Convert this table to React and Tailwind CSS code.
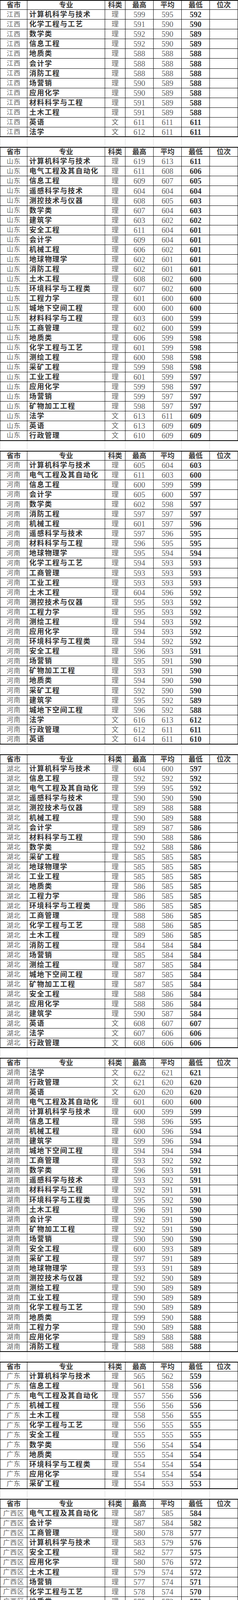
import React from 'react';

const SECTIONS = [
  { p: '江西', rows: `计算机科学与技术 理 599 595 592
化学工程与工艺 理 591 590 590
数学类 理 592 590 589
信息工程 理 592 590 589
地质类 理 588 588 588
会计学 理 588 588 588
消防工程 理 588 588 588
场营销 理 590 589 588
应用化学 理 590 589 588
材料科学与工程 理 591 589 588
土木工程 理 591 589 588
英语 文 611 611 611
法学 文 612 611 611` },
  { p: '山东', rows: `计算机科学与技术 理 619 613 611
电气工程及其自动化 理 611 608 606
信息工程 理 609 607 605
遥感科学与技术 理 604 604 604
测控技术与仪器 理 608 605 603
数学类 理 607 604 603
建筑学 理 603 602 602
安全工程 理 611 604 601
会计学 理 609 604 601
机械工程 理 606 602 601
地球物理学 理 602 601 601
消防工程 理 602 601 601
土木工程 理 608 602 600
环境科学与工程类 理 607 602 600
工程力学 理 601 600 600
城地下空间工程 理 600 600 600
材料科学与工程 理 603 600 599
工商管理 理 602 600 599
地质类 理 606 599 598
化学工程与工艺 理 601 599 598
测绘工程 理 600 598 598
采矿工程 理 599 598 598
工业工程 理 601 599 597
应用化学 理 599 598 597
场营销 理 599 597 597
矿物加工工程 理 598 597 597
法学 文 613 611 609
英语 文 613 609 609
行政管理 文 610 609 609` },
  { p: '河南', rows: `计算机科学与技术 理 605 604 603
电气工程及其自动化 理 611 603 600
信息工程 理 600 599 599
会计学 理 605 600 597
数学类 理 602 598 597
消防工程 理 597 597 597
机械工程 理 601 597 596
遥感科学与技术 理 597 596 595
材料科学与工程 理 596 595 595
地球物理学 理 595 594 594
化学工程与工艺 理 594 593 593
工商管理 理 593 593 593
工业工程 理 593 593 593
土木工程 理 604 596 592
测控技术与仪器 理 595 593 592
工程力学 理 595 593 592
测绘工程 理 594 593 592
应用化学 理 594 593 592
环境科学与工程类 理 594 592 592
安全工程 理 596 593 591
场营销 理 595 591 590
矿物加工工程 理 593 591 590
地质类 理 594 590 590
采矿工程 理 592 590 590
建筑学 理 595 592 589
城地下空间工程 理 596 592 588
法学 文 616 613 612
行政管理 文 612 611 611
英语 文 614 611 610` },
  { p: '湖北', rows: `计算机科学与技术 理 604 600 597
信息工程 理 592 592 592
电气工程及其自动化 理 599 595 592
遥感科学与技术 理 590 590 590
测控技术与仪器 理 589 588 588
机械工程 理 590 589 588
会计学 理 589 587 586
材料科学与工程 理 590 588 586
数学类 理 592 588 586
采矿工程 理 585 585 585
地球物理学 理 585 585 585
工业工程 理 585 585 585
地质类 理 586 585 585
工程力学 理 586 585 585
环境科学与工程类 理 586 585 585
工商管理 理 588 586 585
化学工程与工艺 理 588 586 585
土木工程 理 589 586 585
消防工程 理 584 584 584
场营销 理 585 584 584
测绘工程 理 587 585 584
城地下空间工程 理 587 585 584
矿物加工工程 理 587 585 584
安全工程 理 588 586 584
应用化学 理 588 586 584
建筑学 理 590 587 584
英语 文 608 607 607
法学 文 607 606 606
行政管理 文 608 606 606` },
  { p: '湖南', rows: `法学 文 622 621 621
行政管理 文 621 620 620
英语 文 620 620 620
电气工程及其自动化 理 601 600 600
计算机科学与技术 理 600 599 599
信息工程 理 598 596 595
机械工程 理 600 596 594
建筑学 理 599 596 594
城地下空间工程 理 594 594 594
工商管理 理 593 592 592
数学类 理 596 593 591
遥感科学与技术 理 593 592 591
材料科学与工程 理 592 591 591
环境科学与工程类 理 595 592 590
土木工程 理 596 591 590
会计学 理 592 591 590
矿物加工工程 理 592 591 590
场营销 理 590 590 590
安全工程 理 600 593 589
采矿工程 理 597 591 589
地球物理学 理 593 591 589
测控技术与仪器 理 592 590 589
测绘工程 理 590 589 589
工业工程 理 590 589 589
化学工程与工艺 理 590 589 589
地质类 理 599 590 588
工程力学 理 590 589 588
应用化学 理 589 588 588
消防工程 理 588 588 588` },
  { p: '广东', rows: `计算机科学与技术 理 565 562 559
信息工程 理 561 558 556
电气工程及其自动化 理 557 556 556
机械工程 理 556 556 556
土木工程 理 558 556 555
化学工程与工艺 理 556 555 555
安全工程 理 555 555 555
数学类 理 556 554 554
地质类 理 555 554 554
环境科学与工程类 理 554 554 554
应用化学 理 554 554 554
采矿工程 理 554 553 553` },
  { p: '广西区', rows: `电气工程及其自动化 理 587 585 584
会计学 理 587 584 582
工商管理 理 580 578 577
计算机科学与技术 理 583 579 576
安全工程 理 582 577 575
应用化学 理 580 576 572
土木工程 理 579 574 572
场营销 理 577 574 571
化学工程与工艺 理 578 574 570
地质类 理 575 572 570
环境科学与工程类 理 575 572 570
矿物加工工程 理 570 570 570
采矿工程 理 572 570 569` },
  { p: '广西区', rows: `电气工程及其自动化 理 587 585 584
会计学 理 587 584 582
工商管理 理 580 578 577
计算机科学与技术 理 583 579 576
安全工程 理 582 577 575
应用化学 理 580 576 572
土木工程 理 579 574 572
场营销 理 577 574 571
化学工程与工艺 理 578 574 570
地质类 理 575 572 570
环境科学与工程类 理 575 572 570
矿物加工工程 理 570 570 570
采矿工程 理 572 570 569` },
  { p: '四川', rows: `计算机科学与技术 理 620 619 618
电气工程及其自动化 理 624 618 616
工商管理 理 618 617 616
信息工程 理 617 615 615
机械工程 理 615 614 614
会计学 理 614 613 613
材料科学与工程 理 613 613 613
建筑学 理 613 613 613
环境科学与工程类 理 618 613 612
数学类 理 615 613 612
城地下空间工程 理 614 613 612
工业工程 理 614 613 612
消防工程 理 617 614 611
土木工程 理 620 613 611
安全工程 理 617 613 611
应用化学 理 612 611 611
地球物理学 理 611 611 611
工程力学 理 615 612 610
遥感科学与技术 理 614 612 610
地质类 理 614 611 610
采矿工程 理 611 610 610
测控技术与仪器 理 611 610 610
矿物加工工程 理 610 610 610
测绘工程 理 615 611 609
场营销 理 612 611 609
化学工程与工艺 理 610 609 609` },
  { p: '贵州', rows: `计算机科学与技术 理 571 571 571
电气工程及其自动化 理 585 574 569
会计学 理 568 567 566
应用化学 理 561 561 561
土木工程 理 578 568 561
材料科学与工程 理 569 562 559
机械工程 理 565 562 559
测绘工程 理 561 559 558
工程力学 理 570 564 558
数学类 理 563 559 557
场营销 理 562 559 557
矿物加工工程 理 565 560 557
采矿工程 理 575 562 557
地质类 理 569 562 557
化学工程与工艺 理 567 562 557` },
  { p: '云南', rows: `安全工程 理 599 595 592
应用化学 理 591 588 586
土木工程 理 585 583 582
机械工程 理 582 579 578
地质类 理 584 575 570
矿物加工工程 理 570 570 570
采矿工程 理 581 576 569
化学工程与工艺 理 580 572 569
行政管理 文 613 613 613
法学 文 613 611 610
英语 文 610 610 610` },
  { p: '陕西', rows: `电气工程及其自动化 理 589 588 586
计算机科学与技术 理 578 575 573
会计学 理 574 572 571
信息工程 理 573 572 571
机械工程 理 578 574 570
安全工程 理 583 575 569
测绘工程 理 576 572 569
材料科学与工程 理 571 570 569
数学类 理 571 570 569
工商管理 理 570 569 568
遥感科学与技术 理 568 568 568
工业工程 理 569 568 567
环境科学与工程类 理 569 567 567
土木工程 理 570 567 566
城地下空间工程 理 567 566 566
化学工程与工艺 理 566 566 566
建筑学 理 568 566 565
测控技术与仪器 理 567 566 565
工程力学 理 567 566 565
消防工程 理 566 565 565
应用化学 理 565 565 565
采矿工程 理 568 565 564
地质类 理 567 565 564
矿物加工工程 理 566 565 564
场营销 理 566 564 564
英语 文 594 592 591
法学 文 587 579 575
行政管理 文 585 578 574` },
  { p: '青海', rows: `土木工程 理 454 445 439
采矿工程 理 449 432 419
化学工程与工艺 理 418 418 418
应用化学 理 439 426 413
地质类 理 452 426 407` },
  { p: '宁夏区', rows: `电气工程及其自动化 理 569 560 552
机械工程 理 544 541 539
会计学 理 551 541 532
环境科学与工程类 理 542 536 531
土木工程 理 533 527 523
应用化学 理 522 521 520
安全工程 理 519 518 518
地质类 理 519 518 518
采矿工程 理 533 528 518
测绘工程 理 536 527 518
化学工程与工艺 理 526 521 516
矿物加工工程 理 533 521 515` },
];

// 291 rows in a 7303px sheet
const GRID = 'grid grid-cols-[69px_199px_52px_72px_72px_72px_73px] grid-rows-[100%] h-[25.08px] overflow-hidden';

function HeaderRow() {
  const heads = ['省市', '专业', '科类', '最高', '平均', '最低', '位次'];
  return (
    <div className={`${GRID} border-t-2 border-b border-l border-black`}>
      {heads.map((h, i) => (
        <div
          key={h}
          className={`flex items-center justify-center text-[18px] font-bold text-[#3a3a3a] ${i === 6 ? 'border-r-2' : 'border-r'} border-black`}
        >
          {h}
        </div>
      ))}
    </div>
  );
}

function DataRow({ province, line, last }) {
  const [major, kind, hi, avg, lo] = line.split(' ');
  return (
    <div className={`${GRID} ${last ? 'border-b-2' : 'border-b'} border-l border-black`}>
      <div className="flex items-center justify-center border-r border-black text-[17px] tracking-[1px] text-[#666]">{province}</div>
      <div className="flex items-center pl-[5px] border-r border-black text-[18px] tracking-[1.7px] font-bold text-[#333] whitespace-nowrap overflow-hidden">{major}</div>
      <div className="flex items-center justify-center border-r border-black text-[18px] text-[#666]">{kind}</div>
      <div className="flex items-center justify-center border-r border-black text-[20px] text-[#666]">{hi}</div>
      <div className="flex items-center justify-center border-r border-black text-[20px] text-[#666]">{avg}</div>
      <div className="flex items-center justify-center border-r border-black text-[20px] font-bold text-[#333]">{lo}</div>
      <div className="border-r-2 border-black" />
    </div>
  );
}

function BlankRow() {
  return (
    <div className={`${GRID} border-l border-[#d4d4d4]`}>
      {[0, 1, 2, 3, 4, 5, 6].map(i => (
        <div key={i} className="border-r border-[#d4d4d4]" />
      ))}
    </div>
  );
}

export default function App() {
  return (
    <div className="relative w-[609px] overflow-hidden bg-white leading-none font-['Liberation_Serif','Noto_Sans_CJK_SC',serif]">
      {SECTIONS.map((s, si) => {
        const lines = s.rows.split('\n');
        return (
          <React.Fragment key={si}>
            {si > 0 && <BlankRow />}
            <HeaderRow />
            {lines.map((line, li) => (
              <DataRow key={li} province={s.p} line={line} last={li === lines.length - 1} />
            ))}
          </React.Fragment>
        );
      })}
      <div className="absolute right-[12px] bottom-[6px] text-[15px] text-white font-['Noto_Sans_CJK_SC',sans-serif] [text-shadow:0_0_1px_#444,0_0_1px_#444,0_0_2px_#666]">
        头条 @金哥志愿号
      </div>
    </div>
  );
}
